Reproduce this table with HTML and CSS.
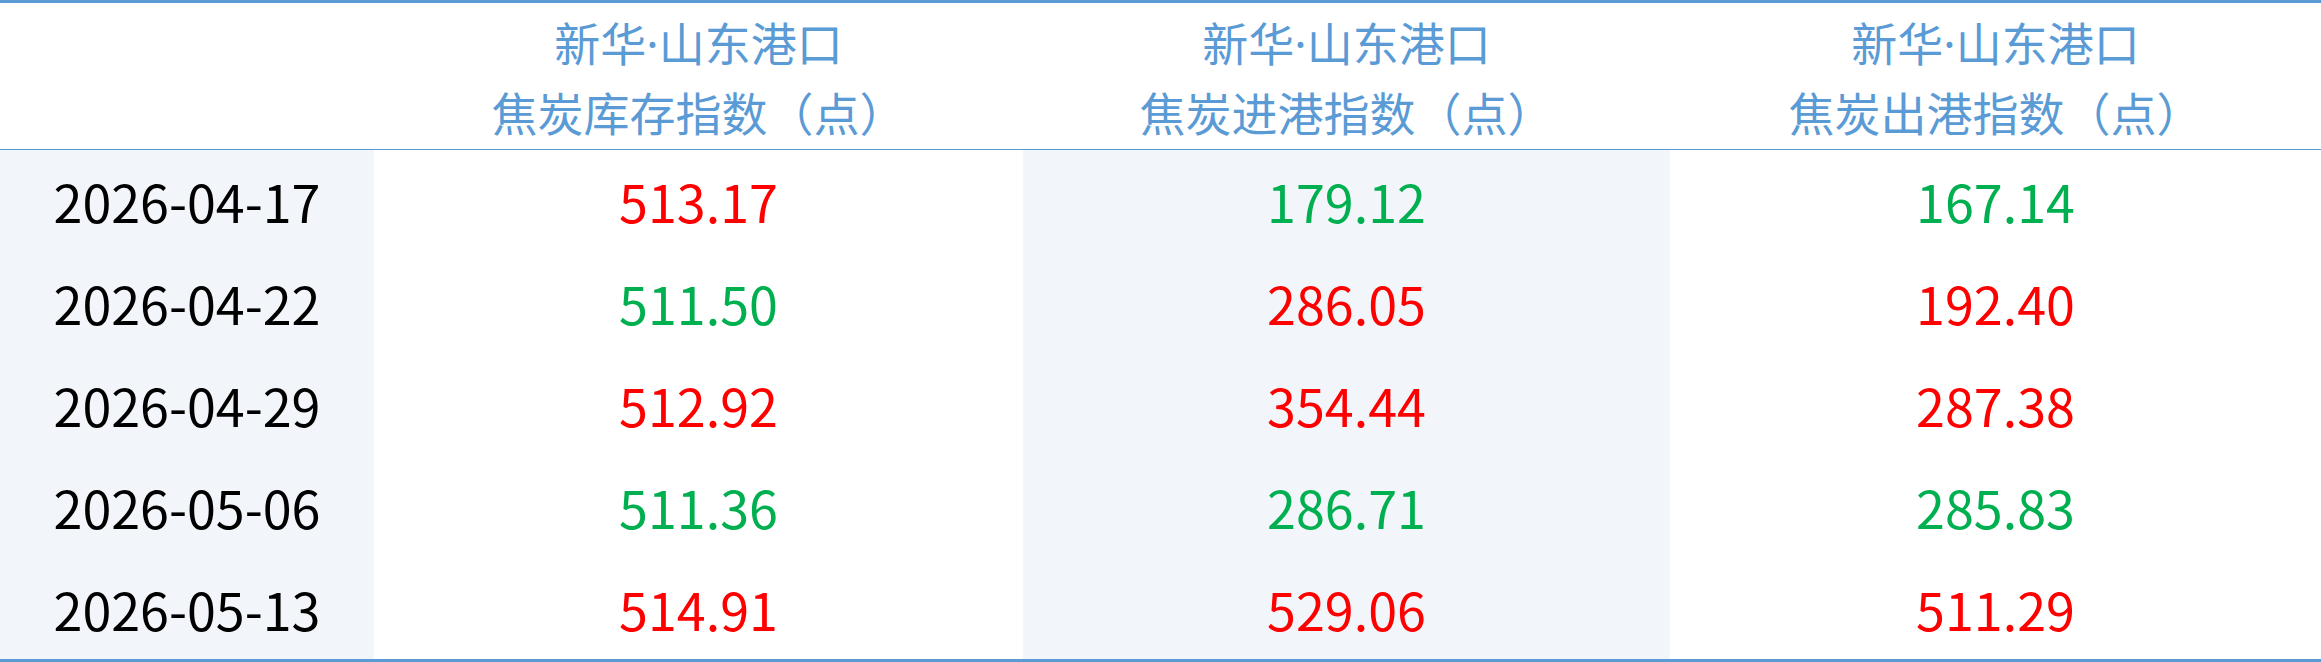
FILE: index.html
```html
<!DOCTYPE html>
<html lang="zh-CN">
<head>
<meta charset="utf-8">
<title>新华·山东港口焦炭指数</title>
<link rel="stylesheet" href="styles.css">
</head>
<body>
<div class="table">
  <div class="head">
    <div class="hcell"></div>
    <div class="hcell"><div class="htext">新华<span class="dot">·</span>山东港口<br>焦炭库存指数（点）</div></div>
    <div class="hcell"><div class="htext">新华<span class="dot">·</span>山东港口<br>焦炭进港指数（点）</div></div>
    <div class="hcell"><div class="htext">新华<span class="dot">·</span>山东港口<br>焦炭出港指数（点）</div></div>
  </div>
  <div class="body">
    <div class="cell date shade">2026-04-17</div>
    <div class="cell up">513.17</div>
    <div class="cell down shade">179.12</div>
    <div class="cell down">167.14</div>

    <div class="cell date shade">2026-04-22</div>
    <div class="cell down">511.50</div>
    <div class="cell up shade">286.05</div>
    <div class="cell up">192.40</div>

    <div class="cell date shade">2026-04-29</div>
    <div class="cell up">512.92</div>
    <div class="cell up shade">354.44</div>
    <div class="cell up">287.38</div>

    <div class="cell date shade">2026-05-06</div>
    <div class="cell down">511.36</div>
    <div class="cell down shade">286.71</div>
    <div class="cell down">285.83</div>

    <div class="cell date shade">2026-05-13</div>
    <div class="cell up">514.91</div>
    <div class="cell up shade">529.06</div>
    <div class="cell up">511.29</div>
  </div>
</div>
</body>
</html>
```
FILE: styles.css
```css
html, body {
  margin: 0;
  padding: 0;
  background: #ffffff;
}
.table {
  width: 2321px;
  height: 662px;
  box-sizing: border-box;
  border-top: 3px solid #5b9bd5;
  border-bottom: 3px solid #5b9bd5;
  display: flex;
  flex-direction: column;
  font-family: "Noto Sans CJK SC", "Noto Sans", sans-serif;
}
.head {
  display: grid;
  grid-template-columns: 374px 649px 647px 1fr;
  height: 146px;
  border-bottom: 1px solid #5b9bd5;
}
.hcell {
  display: flex;
  align-items: center;
  justify-content: center;
}
.htext {
  text-align: center;
  color: #5b9bd5;
  font-size: 46px;
  line-height: 68px;
}
.dot {
  font-family: "Noto Sans", "DejaVu Sans", sans-serif;
}
.body {
  flex: 1;
  display: grid;
  grid-template-columns: 374px 649px 647px 1fr;
  grid-template-rows: repeat(5, 1fr);
}
.cell {
  display: flex;
  align-items: center;
  justify-content: center;
  font-size: 52px;
}
.shade {
  background: #f2f5fa;
}
.date {
  color: #000000;
}
.up {
  color: #ff0000;
}
.down {
  color: #00b050;
}
```
